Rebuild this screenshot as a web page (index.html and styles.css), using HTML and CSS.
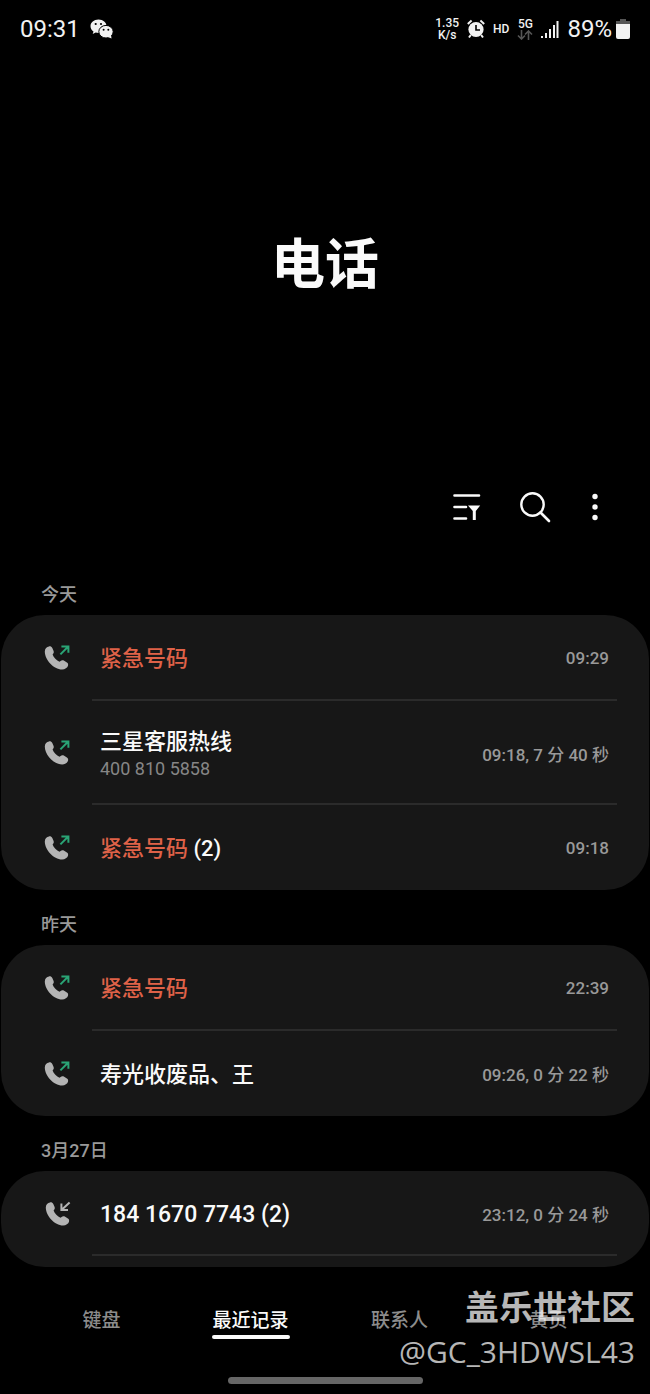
FILE: index.html
```html
<!DOCTYPE html>
<html lang="zh-CN">
<head>
  <meta charset="UTF-8">
  <meta name="viewport" content="width=device-width, initial-scale=1.0">
  <title>电话</title>
  <link rel="stylesheet" href="styles.css">
</head>
<body>
  <!-- shared call icons -->
  <svg class="sprite" aria-hidden="true">
    <symbol id="handset" viewBox="0 0 28 28">
      <path fill="#b4b4b4" d="M5 2.4C2.8 2.6 .8 4.600 .8 7.4C.8 15.5 9.4 25.400 18.2 25.400C21 25.400 23.4 23.700 24 21.700C24.4 20.400 24 19.200 22.900 18.500L19.8 16.500C18.7 15.900 17.4 16.100 16.600 16.900L15.5 17.800C12.600 16.600 9.600 13.400 8.600 10.600L9.300 9.600C9.900 8.700 9.900 7.700 9.500 6.700L8.300 4C7.600 2.700 6.500 2.200 5 2.4Z"/>
    </symbol>
    <symbol id="outgoing" viewBox="0 0 28 28">
      <use href="#handset"/>
      <path fill="none" stroke="#2aa576" stroke-width="2" d="M16.4 10.4L24 2.8M17.4 2.6H24.4V8.8"/>
    </symbol>
    <symbol id="incoming" viewBox="0 0 28 28">
      <use href="#handset" x="1"/>
      <path fill="none" stroke="#b4b4b4" stroke-width="2" d="M25.6 2.4L18 9.6M17.4 3.6V10H24"/>
    </symbol>
  </svg>

  <div class="phone-app">
    <div class="status-bar">
      <span class="clock">09:31</span>
      <svg class="wechat" width="24" height="20" viewBox="0 0 24 20">
        <path fill="#f2f2f2" d="M8.5 .5C3.9 .5 .5 3.5 .5 7.2c0 2.2 1.200 4 3 5.200L2.700 15l3-1.500c.9.3 1.800.4 2.800.4 4.600 0 8-3 8-6.700S13.100.5 8.500.5z"/>
        <ellipse cx="16" cy="12.700" rx="7.200" ry="6.300" fill="#f2f2f2" stroke="#000"/>
        <path fill="#f2f2f2" d="M18 18l3.500 1.500L21 16z"/>
        <g fill="#000">
          <circle cx="5.700" cy="5" r="1.100"/><circle cx="11" cy="5" r="1.100"/>
          <circle cx="13.600" cy="10.800" r="1"/><circle cx="18.300" cy="10.800" r="1"/>
        </g>
      </svg>
      <div class="status-icons">
        <span class="speed">1.35<br>K/s</span>
        <svg width="18" height="20" viewBox="0 0 18 20">
          <circle cx="9" cy="10.500" r="7.600" fill="#f2f2f2"/>
          <path fill="none" stroke="#f2f2f2" stroke-width="2" d="M.8 5L4.600 1.600M17.200 5L13.400 1.600M3.800 16L2 18.500M14.200 16L16 18.500"/>
          <path fill="none" stroke="#000" stroke-width="1.600" d="M9 6v5h4"/>
        </svg>
        <span class="hd">HD</span>
        <span class="network">5G
          <svg width="16" height="10" viewBox="0 0 16 10">
            <path fill="none" stroke="#555" stroke-width="1.600" d="M4.500 0v9M1 5.500l3.500 3.500L8 5.500M11.500 10V1M8 4.500L11.500 1 15 4.500"/>
          </svg>
        </span>
        <svg width="18" height="18" viewBox="0 0 18 18">
          <path fill="#f2f2f2" d="M0 16h2v2H0zM4 13h2v5H4zM8 9h2v9H8zM12 5h2v13h-2zM15.500 1h2v17h-2z"/>
        </svg>
        <div class="battery">
          <span class="percent">89%</span>
          <svg width="14" height="20" viewBox="0 0 14 20">
            <path fill="#555" d="M4 0h6v2h4v4H0V2h4z"/>
            <path fill="#f2f2f2" d="M0 5h14v13a2 2 0 0 1-2 2H2a2 2 0 0 1-2-2z"/>
          </svg>
        </div>
      </div>
    </div>

    <h1 class="title">电话</h1>

    <div class="toolbar">
      <button type="button" aria-label="筛选">
        <svg width="28" height="28" viewBox="0 0 28 28">
          <path fill="none" stroke="#fafafa" stroke-width="2.600" stroke-linecap="round" d="M1.500 2.500H26M1.500 14H13M1.500 25.500H13"/>
          <path fill="#fafafa" d="M15 12.500H27.200L22.800 18V27H19.800V18Z"/>
        </svg>
      </button>
      <button type="button" aria-label="搜索">
        <svg width="32" height="32" viewBox="0 0 32 32">
          <circle cx="13.500" cy="13.500" r="11.200" fill="none" stroke="#fafafa" stroke-width="2.400"/>
          <path stroke="#fafafa" stroke-width="2.600" stroke-linecap="round" d="M21.500 21.500L30 30"/>
        </svg>
      </button>
      <button type="button" class="more" aria-label="更多选项">
        <svg width="6" height="28" viewBox="0 0 6 28">
          <g fill="#fafafa"><circle cx="3" cy="3.500" r="2.700"/><circle cx="3" cy="14" r="2.700"/><circle cx="3" cy="24.500" r="2.700"/></g>
        </svg>
      </button>
    </div>

    <main>
      <h2 class="day">今天</h2>
      <ul class="calls">
        <li class="call">
          <svg class="call-icon"><use href="#outgoing"/></svg>
          <div class="info">
            <div class="name"><span class="emergency">紧急号码</span></div>
            <div class="when">09:29</div>
          </div>
        </li>
        <li class="call tall">
          <svg class="call-icon"><use href="#outgoing"/></svg>
          <div class="info">
            <div class="name">三星客服热线<div class="number">400 810 5858</div></div>
            <div class="when">09:18, 7 分 40 秒</div>
          </div>
        </li>
        <li class="call">
          <svg class="call-icon"><use href="#outgoing"/></svg>
          <div class="info">
            <div class="name"><span class="emergency">紧急号码</span> (2)</div>
            <div class="when">09:18</div>
          </div>
        </li>
      </ul>

      <h2 class="day">昨天</h2>
      <ul class="calls">
        <li class="call">
          <svg class="call-icon"><use href="#outgoing"/></svg>
          <div class="info">
            <div class="name"><span class="emergency">紧急号码</span></div>
            <div class="when">22:39</div>
          </div>
        </li>
        <li class="call">
          <svg class="call-icon"><use href="#outgoing"/></svg>
          <div class="info">
            <div class="name">寿光收废品、王</div>
            <div class="when">09:26, 0 分 22 秒</div>
          </div>
        </li>
      </ul>

      <h2 class="day">3月27日</h2>
      <ul class="calls cut">
        <li class="call">
          <svg class="call-icon"><use href="#incoming"/></svg>
          <div class="info">
            <div class="name digits">184 1670 7743 (2)</div>
            <div class="when">23:12, 0 分 24 秒</div>
          </div>
        </li>
      </ul>
    </main>

    <div class="bottom">
      <nav class="tabs">
        <a href="#keypad">键盘</a>
        <a href="#recents" class="active" aria-current="page">最近记录</a>
        <a href="#contacts">联系人</a>
        <a href="#places">黄页</a>
      </nav>
      <div class="home-bar"></div>
      <div class="watermark">
        <div class="community">盖乐世社区</div>
        <div class="user">@GC_3HDWSL43</div>
      </div>
    </div>
  </div>
</body>
</html>
```
FILE: styles.css
```css
* {
  box-sizing: border-box;
}
body {
  margin: 0;
  background-color: #000;
  color: #fafafa;
  font-family: Roboto, "Noto Sans CJK SC", sans-serif;
}
.sprite {
  position: absolute;
  width: 0;
  height: 0;
}
.status-bar {
  display: flex;
  align-items: center;
  height: 58px;
  padding: 0 20px;
  color: #f2f2f2;
}
.clock,
.percent {
  font-size: 24px;
  font-weight: 400;
}
.wechat {
  margin-left: 10px;
}
.status-icons {
  display: flex;
  align-items: center;
  gap: 8px;
  margin-left: auto;
}
.battery {
  display: flex;
  align-items: center;
  gap: 4px;
}
.speed,
.network,
.hd {
  font-size: 12px;
  line-height: 12px;
  font-weight: 500;
  text-align: center;
}
.network svg {
  display: block;
}
.title {
  display: flex;
  align-items: center;
  justify-content: center;
  height: 412px;
  margin: 0;
  padding-bottom: 8px;
  font-size: 54px;
  font-weight: 700;
}
.toolbar {
  display: flex;
  justify-content: flex-end;
  height: 74px;
  margin-bottom: 16px;
  padding-right: 29px;
}
.toolbar button {
  display: flex;
  align-items: center;
  justify-content: center;
  width: 68px;
  padding: 0;
  border: 0;
  background: none;
  cursor: pointer;
}
.toolbar .more {
  width: 52px;
}
.day {
  margin: 0;
  padding: 21px 41px 6px;
  color: #999;
  font-size: 18px;
  line-height: 28px;
  font-weight: 500;
}
.calls {
  margin: 0 1px;
  padding: 0;
  border-radius: 44px;
  background-color: #171717;
  list-style: none;
}
.calls.cut {
  padding-bottom: 11px;
}
.call {
  display: flex;
  align-items: center;
  height: 86px;
  padding: 0 32px 0 43px;
}
.call:last-child {
  height: 85px;
}
.call.tall {
  height: 104px;
}
.call-icon {
  flex: none;
  width: 28px;
  height: 28px;
  margin-right: 20px;
}
.info {
  display: flex;
  flex: 1;
  align-items: center;
  justify-content: space-between;
  height: 100%;
  padding: 2px 8px 0;
  border-bottom: 2px solid #2b2b2b;
}
.call:last-child .info {
  border-bottom-color: transparent;
}
.cut .call:last-child .info {
  border-bottom-color: #2b2b2b;
}
.name {
  padding-top: 2px;
  font-size: 22px;
  line-height: 30px;
  font-weight: 500;
}
.name.digits {
  font-size: 23px;
}
.emergency {
  color: #df6248;
}
.number {
  color: #868686;
  font-size: 18px;
  line-height: 24px;
  font-weight: 400;
}
.when {
  color: #999;
  font-size: 17px;
  font-weight: 500;
}
.bottom {
  position: relative;
  height: 126px;
}
.tabs {
  display: flex;
  justify-content: space-around;
  padding: 40px 27px 0;
}
.tabs a {
  flex: 1;
  color: #8c8c8c;
  font-size: 19px;
  line-height: 28px;
  font-weight: 500;
  text-align: center;
  text-decoration: none;
}
.tabs .active {
  color: #fafafa;
}
.tabs .active::after {
  content: "";
  display: block;
  width: 78px;
  height: 4px;
  margin: 0 auto;
  border-radius: 2px;
  background-color: #fafafa;
}
.home-bar {
  width: 30%;
  height: 7px;
  margin: 38px auto 0;
  border-radius: 4px;
  background-color: #666;
}
.watermark {
  position: absolute;
  right: 15px;
  bottom: 18px;
  color: rgba(255, 255, 255, 0.72);
  text-align: right;
}
.community {
  font-size: 34px;
  line-height: 42px;
  font-weight: 700;
}
.user {
  font-family: "Open Sans", "Noto Sans", sans-serif;
  font-size: 30px;
  line-height: 46px;
}
```
